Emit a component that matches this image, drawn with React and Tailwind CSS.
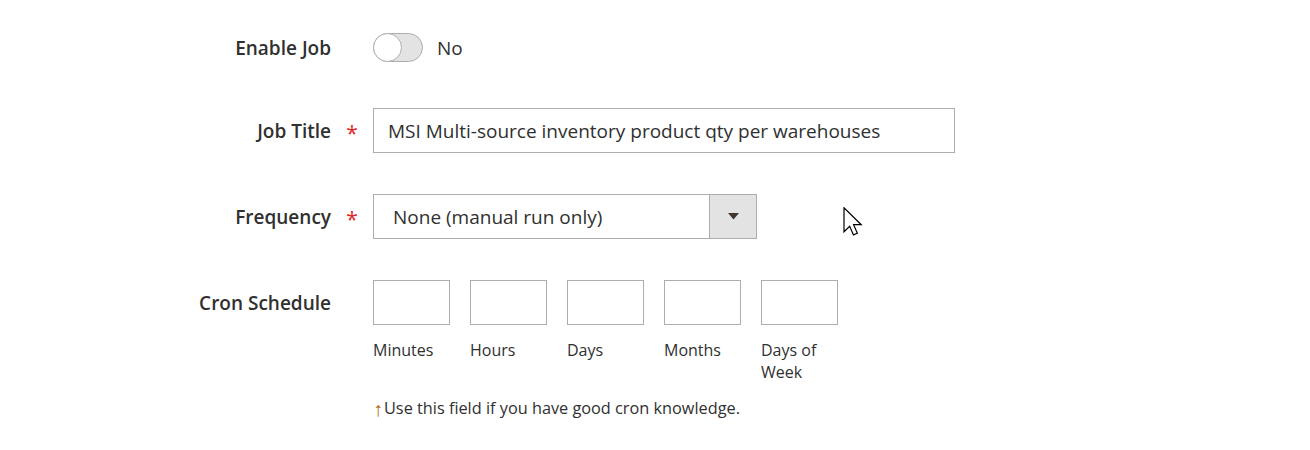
import React from "react";

function Row({ label, required, children, className = "" }) {
  return (
    <div className={`flex items-start ${className}`}>
      <div className="w-[331px] h-[45px] flex items-center justify-end text-[19px] font-semibold text-[#303030] pt-[2px]">
        {label}
      </div>
      <div className="w-[42px] h-[45px] flex items-center justify-center text-[21px] text-[#e22626] pt-[7px]">
        {required ? "*" : ""}
      </div>
      <div>{children}</div>
    </div>
  );
}

export default function App() {
  const cron = ["Minutes", "Hours", "Days", "Months", "Days of Week"];
  return (
    <div
      className="relative w-[1310px] h-[450px] bg-white text-[#303030]"
      style={{ fontFamily: '"Open Sans", "Noto Sans", sans-serif' }}
    >
      <div className="pt-[25px]">
        <Row label="Enable Job" className="mb-[38px]">
          <div className="h-[45px] flex items-center">
            <div className="relative w-[50px] h-[29px] rounded-full bg-[#e3e3e3] border border-[#adadad]">
              <div className="absolute left-[-1px] top-[-1px] w-[29px] h-[29px] rounded-full bg-white border border-[#adadad]" />
            </div>
            <span className="ml-[14px] text-[19px] pt-[1px]">No</span>
          </div>
        </Row>
        <Row label="Job Title" required className="mb-[41px]">
          <div className="w-[582px] h-[45px] border border-[#adadad] flex items-center pl-[14px] pt-[1px] text-[19px]">
            MSI Multi-source inventory product qty per warehouses
          </div>
        </Row>
        <Row label="Frequency" required className="mb-[41px]">
          <div className="w-[384px] h-[45px] border border-[#adadad] flex items-center text-[19px]">
            <div className="flex-1 pl-[19px] pt-[1px]">None (manual run only)</div>
            <div className="w-[47px] h-full bg-[#e3e3e3] border-l border-[#adadad] flex items-center justify-center">
              <svg width="11" height="7" viewBox="0 0 11 7">
                <path d="M0 0 L11 0 L5.5 6.5 Z" fill="#41362f" />
              </svg>
            </div>
          </div>
        </Row>
        <Row label="Cron Schedule">
          <div className="flex gap-[20px]">
            {cron.map((c) => (
              <div key={c} className="w-[77px]">
                <div className="w-[77px] h-[45px] border border-[#adadad]" />
                <div className="mt-[14px] text-[16px] leading-[22px] text-[#303030]">{c}</div>
              </div>
            ))}
          </div>
          <div className="mt-[14px] text-[16.3px] leading-[20px] text-[#303030] flex items-center">
            <span className="text-[#b06a26] text-[20px] leading-[20px] mr-[1px] pt-[2px]">↑</span>
            <span>Use this field if you have good cron knowledge.</span>
          </div>
        </Row>
      </div>
      <svg
        className="absolute left-[843px] top-[207px]"
        width="20"
        height="30"
        viewBox="0 0 13 20"
      >
        <path
          d="M0.5 0.5 L0.5 16.5 L4.3 12.8 L6.8 18.6 L9.4 17.5 L6.9 11.8 L12 11.8 Z"
          fill="white"
          stroke="black"
          strokeWidth="0.8"
          strokeLinejoin="miter"
        />
      </svg>
    </div>
  );
}
